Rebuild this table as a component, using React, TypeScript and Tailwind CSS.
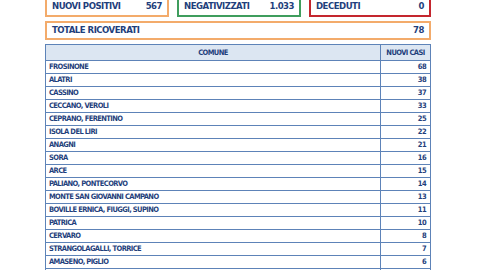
import type { ReactNode } from "react";

const rows: [string, number][] = [
  ["FROSINONE", 68],
  ["ALATRI", 38],
  ["CASSINO", 37],
  ["CECCANO, VEROLI", 33],
  ["CEPRANO, FERENTINO", 25],
  ["ISOLA DEL LIRI", 22],
  ["ANAGNI", 21],
  ["SORA", 16],
  ["ARCE", 15],
  ["PALIANO, PONTECORVO", 14],
  ["MONTE SAN GIOVANNI CAMPANO", 13],
  ["BOVILLE ERNICA, FIUGGI, SUPINO", 11],
  ["PATRICA", 10],
  ["CERVARO", 8],
  ["STRANGOLAGALLI, TORRICE", 7],
  ["AMASENO, PIGLIO", 6],
];

function StatBox({
  label,
  value,
  border,
  className = "",
}: {
  label: string;
  value: ReactNode;
  border: string;
  className?: string;
}) {
  return (
    <div
      className={`flex items-center justify-between border-2 bg-white px-[5px] ${border} ${className}`}
    >
      <span>{label}</span>
      <span>{value}</span>
    </div>
  );
}

export default function App() {
  return (
    <div
      className="h-[270px] w-[480px] overflow-hidden bg-white font-bold text-[#1f3f7c]"
      style={{ fontFamily: '"DejaVu Sans Condensed", "DejaVu Sans", sans-serif' }}
    >
      <div className="ml-[45px] flex w-[386px] flex-col">
        <div className="-mt-[4px] flex h-[21px] gap-[8px] text-[9.5px] tracking-[-0.5px]">
          <StatBox label="NUOVI POSITIVI" value="567" border="border-[#f3ab6b]" className="w-[124px]" />
          <StatBox label="NEGATIVIZZATI" value="1.033" border="border-[#3f9d5d]" className="w-[124px]" />
          <StatBox label="DECEDUTI" value="0" border="border-[#c4262e]" className="flex-1" />
        </div>
        <StatBox
          label="TOTALE RICOVERATI"
          value="78"
          border="border-[#f3ab6b]"
          className="mt-[4px] h-[19px] text-[9.5px] tracking-[-0.5px]"
        />

        <div className="mt-[4px] border border-[#5d83b8] text-[7.5px] tracking-[-0.6px]">
          <div className="grid h-[15px] grid-cols-[1fr_49px] bg-[#dce6f2]">
            <div className="flex items-center justify-center border-r border-[#5d83b8]">COMUNE</div>
            <div className="flex items-center justify-center">NUOVI CASI</div>
          </div>
          {rows.map(([name, cases]) => (
            <div
              key={name}
              className="grid h-[13px] grid-cols-[1fr_49px] border-t border-[#5d83b8]"
            >
              <div className="flex items-center border-r border-[#5d83b8] pl-[3px]">{name}</div>
              <div className="flex items-center justify-end pr-[4px]">{cases}</div>
            </div>
          ))}
          <div className="grid h-[13px] grid-cols-[1fr_49px] border-t border-[#5d83b8]">
            <div className="border-r border-[#5d83b8]" />
            <div />
          </div>
        </div>
      </div>
    </div>
  );
}
